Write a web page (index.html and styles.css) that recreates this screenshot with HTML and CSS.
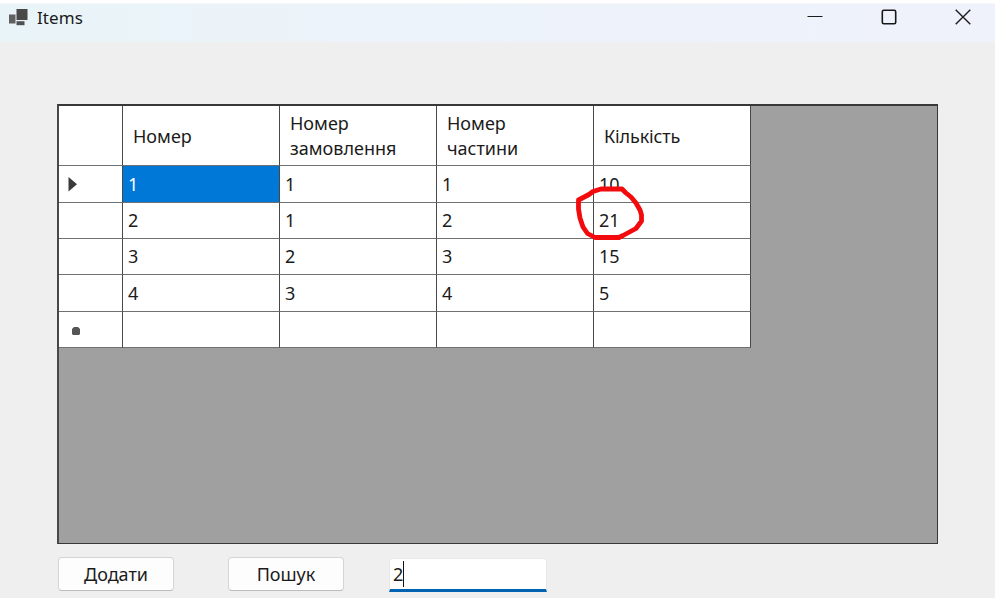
FILE: index.html
```html
<!DOCTYPE html>
<html lang="uk">
<head>
<meta charset="utf-8">
<title>Items</title>
<link rel="stylesheet" href="styles.css">
</head>
<body>
<div class="window">
  <header class="titlebar">
    <svg class="app-icon" width="20" height="18" viewBox="0 0 20 18">
      <rect x="1" y="5.500" width="6.500" height="9" fill="#606060"/>
      <rect x="8.500" y="0" width="11" height="11" fill="#484848"/>
      <path d="M8.500 12.200h8v4h-8z" fill="#505050"/>
    </svg>
    <h1 class="title">Items</h1>
    <div class="controls">
      <svg width="16" height="16" viewBox="0 0 16 16"><path d="M0.500 7.500h15" stroke="#1c1c1c"/></svg>
      <svg width="16" height="16" viewBox="0 0 16 16"><rect x="1.300" y="1.300" width="13.400" height="13.400" rx="1.500" fill="none" stroke="#181818" stroke-width="1.600"/></svg>
      <svg width="16" height="16" viewBox="0 0 16 16"><path d="M0.700 0.700l14.600 14.600M15.300 0.700L0.700 15.300" stroke="#1c1c1c" stroke-width="1.400"/></svg>
    </div>
  </header>
  <main class="content">
    <section class="data-grid">
      <div class="table">
        <div class="cell head"></div><div class="cell head">Номер</div><div class="cell head"><span>Номер<br>замовлення</span></div><div class="cell head"><span>Номер<br>частини</span></div><div class="cell head last">Кількість</div>
        <div class="cell marker"><svg width="10" height="16" viewBox="0 0 10 16"><path d="M0.500 1L9 8.200L0.500 15.500z" fill="#3a3a3a"/></svg></div><div class="cell selected">1</div><div class="cell">1</div><div class="cell">1</div><div class="cell">10</div>
        <div class="cell"></div><div class="cell">2</div><div class="cell">1</div><div class="cell">2</div><div class="cell">21</div>
        <div class="cell"></div><div class="cell">3</div><div class="cell">2</div><div class="cell">3</div><div class="cell">15</div>
        <div class="cell"></div><div class="cell">4</div><div class="cell">3</div><div class="cell">4</div><div class="cell">5</div>
        <div class="cell marker new"><svg width="10" height="10" viewBox="0 0 10 10"><path d="M3 1h4l2 2v5l-1 1H2L1 8V3z" fill="#555"/></svg></div><div class="cell"></div><div class="cell"></div><div class="cell"></div><div class="cell"></div>
      </div>
      <svg class="annotation" width="72" height="62" viewBox="0 0 72 62"><path d="M18 9.500L26 7H47L51 11L56 15L61 21L65 28L66.500 33V39L61 46.500L48 53.500L44 55.500H20L12.500 51.500L8 45L5 36L3.500 27V18L14 12.500Z" fill="none" stroke="#f20a0d" stroke-width="4.800" stroke-linejoin="round"/></svg>
    </section>
    <div class="actions">
      <button class="button">Додати</button>
      <button class="button">Пошук</button>
      <div class="field"><span>2</span><i class="caret"></i></div>
    </div>
  </main>
</div>
</body>
</html>
```

FILE: styles.css
```css
* { box-sizing: border-box; }

body {
  margin: 0;
  background: #fff;
  color: #1b1b1b;
  font: 18px/25px "Noto Sans", "Open Sans", sans-serif;
}

.window {
  height: 598px;
  padding-top: 3px;
  overflow: hidden;
  background: linear-gradient(#fff 0 3px, #efefef 3px);
}

.titlebar {
  display: flex;
  align-items: flex-start;
  height: 39px;
  padding: 5px 24px 0 8px;
  background: linear-gradient(90deg, #e9f4f8, #edf3fa 45%, #eff2fb);
  border-top: 1px solid #f4f6f8;
}

.app-icon { margin-right: 9px; }

.title {
  margin: -4px 0 0;
  font-size: 17px;
  font-weight: 400;
  line-height: 25px;
  letter-spacing: 0.1px;
}

.controls {
  display: flex;
  gap: 58px;
  margin-left: auto;
}

.content { padding: 62px 0 0 57px; }

.data-grid {
  position: relative;
  width: 881px;
  height: 440px;
  border: 1px solid #383838;
  border-top: 2px solid #383838;
  border-left: 2px solid #484848;
  background: #a0a0a0;
}

.table {
  display: grid;
  grid-template-columns: 64px repeat(4, 157px);
  grid-template-rows: 60px 37px 36px 36px 37px 36px;
  width: 692px;
}

.cell {
  display: flex;
  align-items: center;
  padding: 0 0 0 5px;
  border-right: 1px solid #484848;
  border-bottom: 1px solid #707070;
  background: #fff;
}

.head { padding-left: 10px; padding-top: 1px; }
.last { letter-spacing: -0.150px; }
.marker { padding-left: 9px; }
.new { padding: 3px 0 0 12px; }
.selected { background: #0078d7; color: #fff; }

.annotation {
  position: absolute;
  left: 516px;
  top: 76px;
}

.actions {
  display: flex;
  align-items: flex-start;
  padding: 13px 0 0 1px;
}

.button {
  width: 116px;
  height: 34px;
  margin-right: 54px;
  padding: 0;
  border: 1px solid #d4d4d4;
  border-bottom-color: #bcbcbc;
  border-radius: 4px;
  background: #fdfdfd;
  color: #1b1b1b;
  font: inherit;
}

.field {
  display: flex;
  align-items: center;
  width: 158px;
  height: 34px;
  margin: 1px 0 0 -9px;
  padding-left: 3px;
  border: 1px solid #e8e8e8;
  border-bottom: 3px solid #0063b1;
  border-radius: 3px 3px 0 0;
  background: #fff;
}

.caret {
  width: 1px;
  height: 26px;
  background: #111;
}
```
